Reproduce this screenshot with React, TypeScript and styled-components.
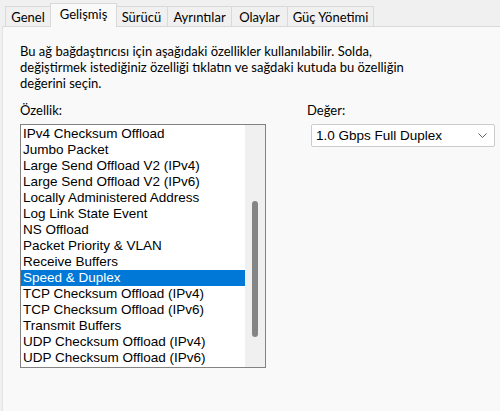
import { createGlobalStyle, styled } from 'styled-components';

const GlobalStyle = createGlobalStyle`
  html, body {
    margin: 0;
    padding: 0;
    background: #f0f0f0;
  }
  body {
    font-family: Lato, 'Noto Sans', sans-serif;
    font-size: 13px;
    color: #000;
  }
`;

const Window = styled.div`
  width: 500px;
  height: 411px;
  display: flex;
  flex-direction: column;
  padding-left: 2px;
  box-sizing: border-box;
  overflow: hidden;
`;

const TabBar = styled.div`
  display: flex;
  align-items: flex-end;
  height: 27px;
  padding-left: 3px;
  position: relative;
  z-index: 1;
  margin-bottom: -1px;
`;

const Tab = styled.div<{ $width: number; $active?: boolean }>`
  width: ${(p) => p.$width}px;
  height: ${(p) => (p.$active ? 24 : 20)}px;
  box-sizing: border-box;
  display: flex;
  align-items: center;
  justify-content: center;
  margin-left: ${(p) => (p.$active ? -1 : 0)}px;
  margin-right: ${(p) => (p.$active ? -1 : 0)}px;
  margin-bottom: ${(p) => (p.$active ? 0 : 1)}px;
  border: 1px solid #d9d9d9;
  border-left: ${(p) => (p.$active ? '1px solid #d9d9d9' : 'none')};
  border-bottom: none;
  background: ${(p) => (p.$active ? '#f9f9f9' : '#f0f0f0')};
  position: relative;
  z-index: ${(p) => (p.$active ? 2 : 1)};
  padding-bottom: ${(p) => (p.$active ? 3 : 0)}px;

  &:first-child {
    border-left: 1px solid #d9d9d9;
  }
`;

const Panel = styled.div`
  flex: 1;
  background: #f9f9f9;
  border-top: 1px solid #d9d9d9;
  border-left: 1px solid #e3e3e3;
  padding: 16px 0 0 17px;
`;

const Description = styled.p`
  margin: 0;
  line-height: 16px;
  width: 460px;
`;

const Columns = styled.div`
  display: flex;
  margin-top: 11px;
`;

const LeftColumn = styled.div`
  width: 246px;
  display: flex;
  flex-direction: column;
`;

const RightColumn = styled.div`
  margin-left: 41px;
  display: flex;
  flex-direction: column;
`;

const Label = styled.div`
  line-height: 16px;
  height: 16px;
`;

const ListBox = styled.div`
  margin-top: 6px;
  height: 244px;
  box-sizing: border-box;
  border: 1px solid #828282;
  background: #fff;
  display: flex;
`;

const ListItems = styled.div`
  flex: 1;
  padding: 1px 0;
  font-family: 'Liberation Sans', Arial, sans-serif;
  font-size: 13.5px;
`;

const ListItem = styled.div<{ $selected?: boolean }>`
  height: 16px;
  line-height: 16px;
  padding-left: 2px;
  white-space: nowrap;
  background: ${(p) => (p.$selected ? '#0078d7' : 'transparent')};
  color: ${(p) => (p.$selected ? '#fff' : '#000')};
`;

const ScrollTrack = styled.div`
  width: 20px;
  background: #f0f0f0;
  display: flex;
  justify-content: center;
  padding-top: 76px;
  box-sizing: border-box;
`;

const ScrollThumb = styled.div`
  width: 6px;
  height: 136px;
  border-radius: 3px;
  background: #858585;
`;

const Select = styled.div`
  margin-top: 6px;
  margin-left: 4px;
  width: 184px;
  height: 23px;
  box-sizing: border-box;
  border: 1px solid #cccccc;
  border-radius: 2px;
  background: #fff;
  display: flex;
  align-items: center;
  justify-content: space-between;
  padding: 0 7px 0 4px;
  font-family: 'Liberation Sans', Arial, sans-serif;
  font-size: 13.5px;
`;

const tabs = [
  { label: 'Genel', width: 46 },
  { label: 'Gelişmiş', width: 67, active: true },
  { label: 'Sürücü', width: 52 },
  { label: 'Ayrıntılar', width: 64 },
  { label: 'Olaylar', width: 56 },
  { label: 'Güç Yönetimi', width: 86 },
];

const properties = [
  'IPv4 Checksum Offload',
  'Jumbo Packet',
  'Large Send Offload V2 (IPv4)',
  'Large Send Offload V2 (IPv6)',
  'Locally Administered Address',
  'Log Link State Event',
  'NS Offload',
  'Packet Priority & VLAN',
  'Receive Buffers',
  'Speed & Duplex',
  'TCP Checksum Offload (IPv4)',
  'TCP Checksum Offload (IPv6)',
  'Transmit Buffers',
  'UDP Checksum Offload (IPv4)',
  'UDP Checksum Offload (IPv6)',
];

export default function App() {
  return (
    <>
      <GlobalStyle />
      <Window>
        <TabBar>
          {tabs.map((t) => (
            <Tab key={t.label} $width={t.width} $active={t.active}>
              {t.label}
            </Tab>
          ))}
        </TabBar>
        <Panel>
          <Description>
            Bu ağ bağdaştırıcısı için aşağıdaki özellikler kullanılabilir. Solda,
            <br />
            değiştirmek istediğiniz özelliği tıklatın ve sağdaki kutuda bu özelliğin
            <br />
            değerini seçin.
          </Description>
          <Columns>
            <LeftColumn>
              <Label>Özellik:</Label>
              <ListBox>
                <ListItems>
                  {properties.map((p) => (
                    <ListItem key={p} $selected={p === 'Speed & Duplex'}>
                      {p}
                    </ListItem>
                  ))}
                </ListItems>
                <ScrollTrack>
                  <ScrollThumb />
                </ScrollTrack>
              </ListBox>
            </LeftColumn>
            <RightColumn>
              <Label>Değer:</Label>
              <Select>
                <span>1.0 Gbps Full Duplex</span>
                <svg width="9" height="5" viewBox="0 0 9 5">
                  <path d="M0.5 0.5 L4.5 4.5 L8.5 0.5" fill="none" stroke="#5f5f5f" strokeWidth="1" />
                </svg>
              </Select>
            </RightColumn>
          </Columns>
        </Panel>
      </Window>
    </>
  );
}
